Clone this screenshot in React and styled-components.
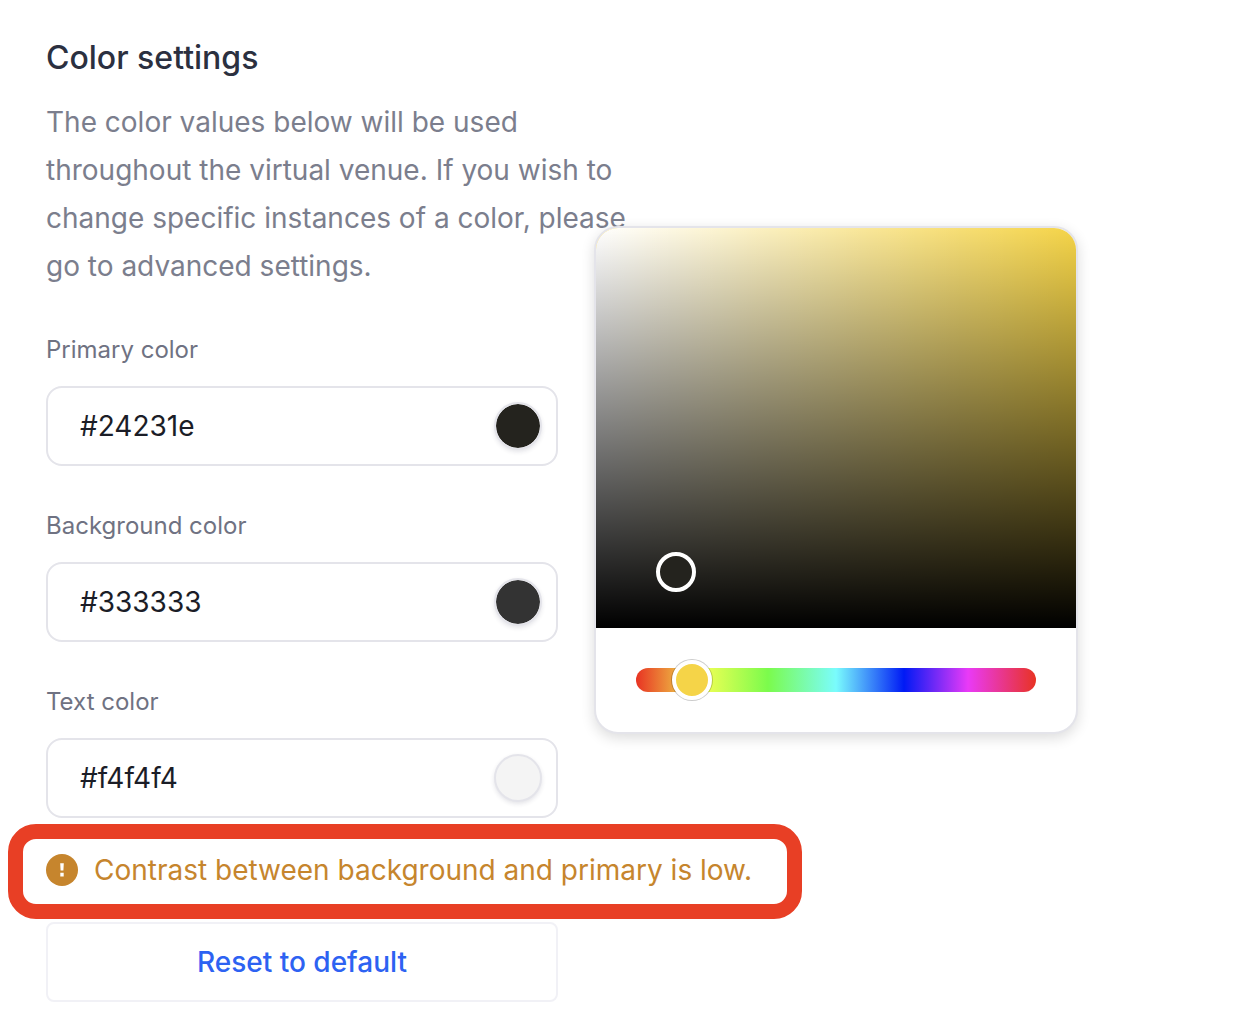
import React, { useState } from "react";
import styled, { createGlobalStyle } from "styled-components";

const GlobalStyle = createGlobalStyle`
  *, *::before, *::after { box-sizing: border-box; }
  body {
    margin: 0;
    background: #ffffff;
    font-family: Inter, "Liberation Sans", sans-serif;
    font-size: 28px;
    line-height: 48px;
    -webkit-font-smoothing: antialiased;
  }
  button, input { font: inherit; }
`;

const Panel = styled.main`
  max-width: 640px;
  padding: 34px 0 24px 46px;
`;

const Title = styled.h1`
  margin: 0 0 16px;
  font-size: 32px;
  font-weight: 500;
  color: #2b3040;
`;

const Description = styled.p`
  margin: 0;
  color: #7b7e8d;
`;

const Form = styled.form`
  width: 512px;
  max-width: 100%;
`;

const Field = styled.div`
  margin-top: 42px;
`;

const Label = styled.label`
  display: block;
  margin-bottom: 18px;
  font-size: 24px;
  line-height: 36px;
  color: #6f7282;
`;

const Control = styled.div`
  position: relative;
  display: flex;
  align-items: center;
  height: 80px;
  padding: 0 14px 0 32px;
  border: 2px solid #e4e4ea;
  border-radius: 16px;
  background: #ffffff;
`;

const HexInput = styled.input`
  flex: 1;
  min-width: 0;
  padding: 0;
  border: 0;
  outline: 0;
  background: transparent;
  color: #1b1d27;
`;

const Swatch = styled.button`
  width: 48px;
  height: 48px;
  padding: 0;
  border: 2px solid #e4e4ea;
  border-radius: 50%;
  background: ${(p) => p.$color};
  background-clip: ${(p) => (p.$light ? "border-box" : "padding-box")};
  box-shadow: 0 2px 4px rgba(40, 44, 70, 0.12);
  cursor: pointer;
`;

const Popover = styled.div`
  position: absolute;
  z-index: 1;
  top: -162px;
  left: calc(100% + 38px);
  width: 484px;
  border: 2px solid #e4e4ea;
  border-radius: 24px;
  background: #ffffff;
  box-shadow: 0 4px 14px rgba(0, 0, 0, 0.14);
  overflow: hidden;
`;

const Saturation = styled.div`
  position: relative;
  height: 400px;
  background:
    linear-gradient(to top, #000000, transparent),
    linear-gradient(to right, #ffffff, transparent),
    #f5d448;
`;

const SaturationHandle = styled.button`
  position: absolute;
  width: 40px;
  height: 40px;
  padding: 0;
  border: 4px solid #ffffff;
  border-radius: 50%;
  background: #24231e;
  transform: translate(-50%, -50%);
`;

const HueArea = styled.div`
  padding: 40px;
`;

const HueTrack = styled.div`
  display: flex;
  align-items: center;
  height: 24px;
  border-radius: 12px;
  background: linear-gradient(
    to right,
    #e83323 0%,
    #f0ff54 17%,
    #7bfb4c 33%,
    #7afcfd 50%,
    #001af5 67%,
    #e93af7 83%,
    #e83323 100%
  );
`;

const HueSlider = styled.input`
  flex: 1;
  height: 40px;
  margin: 0 -20px;
  appearance: none;
  background: transparent;
  outline: 0;

  &::-webkit-slider-thumb {
    appearance: none;
    width: 40px;
    height: 40px;
    border: 4px solid #ffffff;
    border-radius: 50%;
    background: #f5d448;
    box-shadow: 0 0 0 1px rgba(0, 0, 0, 0.2);
  }
`;

const Warning = styled.p`
  position: relative;
  display: flex;
  align-items: center;
  gap: 16px;
  width: max-content;
  margin: 28px 0;
  color: #c6852d;

  svg { flex: none; }

  &::after {
    content: "";
    position: absolute;
    inset: -22px -50px -25px -38px;
    border: 15px solid #e83f25;
    border-radius: 28px;
    pointer-events: none;
  }
`;

const ResetButton = styled.button`
  width: 100%;
  height: 80px;
  padding: 0;
  border: 2px solid #f1f1f6;
  border-radius: 8px;
  background: #ffffff;
  font-weight: 500;
  color: #2d62f2;
  cursor: pointer;
`;

const saturation = { x: 80 / 480, y: 344 / 400 };

function WarningIcon() {
  return (
    <svg width="32" height="32" viewBox="0 0 32 32" aria-hidden="true">
      <circle cx="16" cy="16" r="16" fill="#c6852d" />
      <path d="M14.2 9.2h3.6l-.4 7.2h-2.8zM14.3 18.8h3.4v3.6h-3.4z" fill="#ffffff" />
    </svg>
  );
}

function ColorPicker() {
  const [hue, setHue] = useState(50);
  return (
    <Popover>
      <Saturation>
        <SaturationHandle
          type="button"
          aria-label="Saturation and brightness"
          style={{ left: `${saturation.x * 100}%`, top: `${saturation.y * 100}%` }}
        />
      </Saturation>
      <HueArea>
        <HueTrack>
          <HueSlider
            type="range"
            min="0"
            max="360"
            aria-label="Hue"
            value={hue}
            onChange={(e) => setHue(Number(e.target.value))}
          />
        </HueTrack>
      </HueArea>
    </Popover>
  );
}

function ColorField({ id, label, value, light, children }) {
  return (
    <Field>
      <Label htmlFor={id}>{label}</Label>
      <Control>
        <HexInput id={id} type="text" defaultValue={value} spellCheck={false} />
        <Swatch type="button" aria-label={`Pick ${label.toLowerCase()}`} $color={value} $light={light} />
        {children}
      </Control>
    </Field>
  );
}

export default function App() {
  return (
    <>
      <GlobalStyle />
      <Panel>
        <Title>Color settings</Title>
        <Description>
          The color values below will be used throughout the virtual venue. If you wish to change
          specific instances of a color, please go to advanced settings.
        </Description>
        <Form onSubmit={(e) => e.preventDefault()}>
          <ColorField id="primary" label="Primary color" value="#24231e">
            <ColorPicker />
          </ColorField>
          <ColorField id="background" label="Background color" value="#333333" />
          <ColorField id="text" label="Text color" value="#f4f4f4" light />
          <Warning role="alert">
            <WarningIcon />
            Contrast between background and primary is low.
          </Warning>
          <ResetButton type="button">Reset to default</ResetButton>
        </Form>
      </Panel>
    </>
  );
}
